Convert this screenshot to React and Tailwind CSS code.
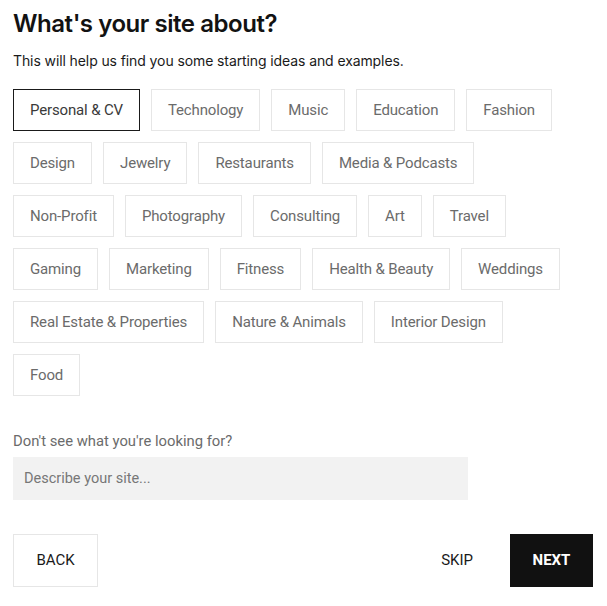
import React, { useState } from 'react'

const categories = [
  'Personal & CV', 'Technology', 'Music', 'Education', 'Fashion',
  'Design', 'Jewelry', 'Restaurants', 'Media & Podcasts',
  'Non-Profit', 'Photography', 'Consulting', 'Art', 'Travel',
  'Gaming', 'Marketing', 'Fitness', 'Health & Beauty', 'Weddings',
  'Real Estate & Properties', 'Nature & Animals', 'Interior Design',
  'Food',
]

const App = () => {
  const [selected, setSelected] = useState('Personal & CV')

  return (
    <div className="min-h-screen bg-white px-[13px] pt-[9px] font-['Roboto',sans-serif]">
      <h1 className="text-[24px] leading-[30px] font-semibold text-[#121212] font-['Inter',sans-serif] tracking-[-0.45px]">
        What's your site about?
      </h1>
      <p className="mt-[12px] text-[14px] leading-[20px] text-[#1a1a1a] font-['Inter',sans-serif] tracking-[-0.1px]">
        This will help us find you some starting ideas and examples.
      </p>

      {/* Category chips */}
      <div className="mt-[18px] w-[560px] flex flex-wrap gap-x-[11px] gap-y-[11px]">
        {categories.map((c) => (
          <button
            key={c}
            onClick={() => setSelected(c)}
            className={`h-[42px] px-[16px] text-[15px] tracking-[-0.15px] bg-white border ${
              selected === c ? 'border-[#1a1a1a] text-[#3a3a3a]' : 'border-[#e6e6e6] text-[#6b6b6b]'
            }`}
          >
            {c}
          </button>
        ))}
      </div>

      <p className="mt-[35px] text-[14.8px] leading-[20px] text-[#6b6b6b]">
        Don't see what you're looking for?
      </p>
      <input
        type="text"
        placeholder="Describe your site..."
        className="mt-[6px] w-[455px] h-[43px] bg-[#f2f2f2] px-[11px] text-[14.5px] text-[#333] placeholder:text-[#777] outline-none"
      />

      {/* Navigation */}
      <div className="mt-[34px] w-[580px] flex items-center">
        <button className="w-[85px] h-[53px] border border-[#e6e6e6] text-[15px] text-[#1a1a1a]">
          BACK
        </button>
        <div className="ml-auto flex items-center">
          <button className="mr-[37px] text-[15px] text-[#1a1a1a]">SKIP</button>
          <button className="w-[83px] h-[53px] bg-[#111111] text-white text-[15px] font-bold">
            NEXT
          </button>
        </div>
      </div>
    </div>
  )
}

export default App
